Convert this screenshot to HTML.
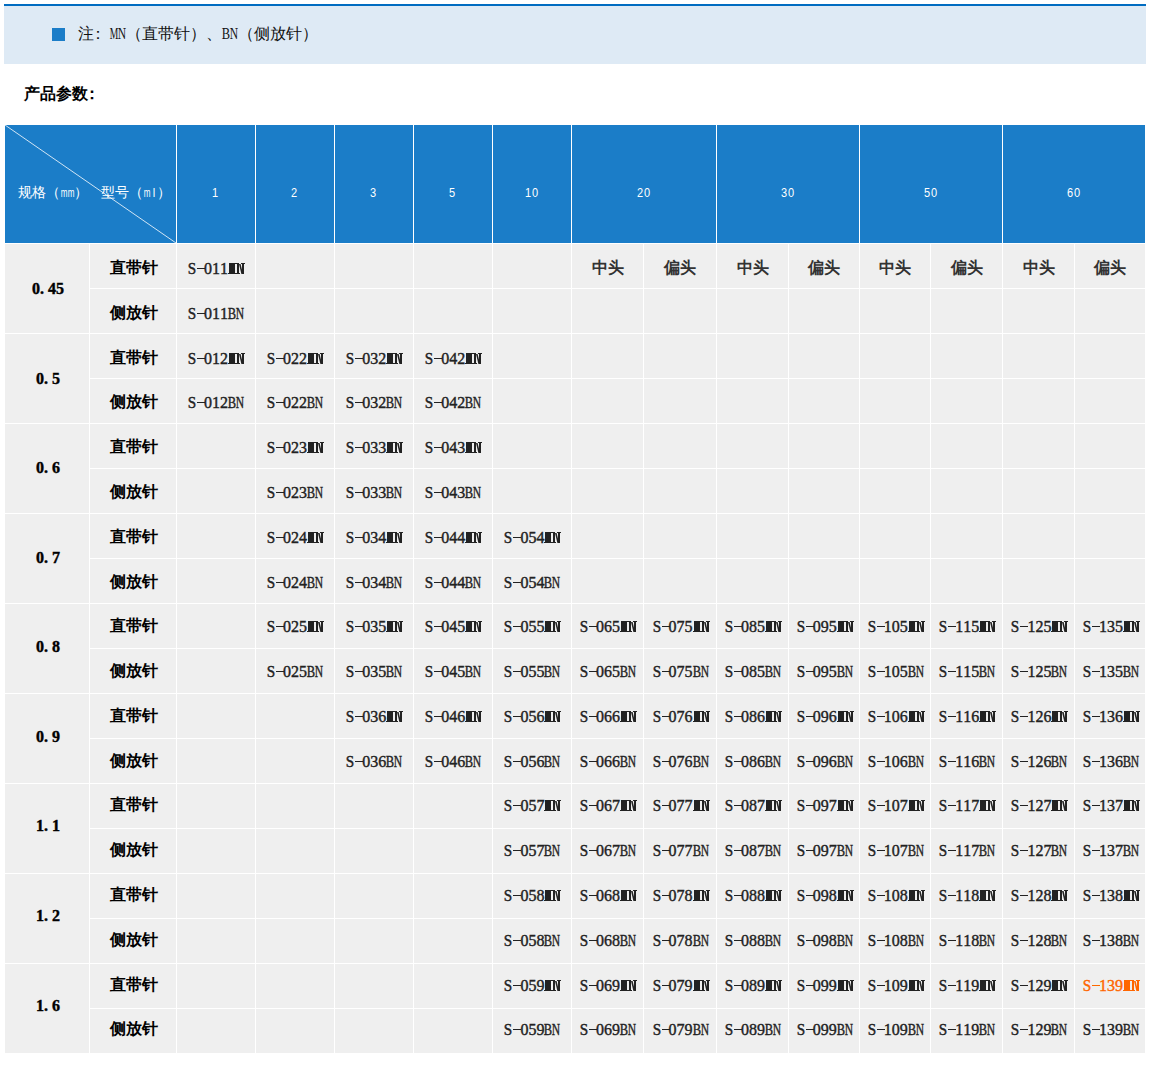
<!DOCTYPE html>
<html><head><meta charset="utf-8"><title>产品参数</title>
<style>
html,body{margin:0;padding:0;background:#fff;}
body{width:1150px;height:1090px;position:relative;overflow:hidden;font-family:"Liberation Sans",sans-serif;}
.note{position:absolute;left:4px;top:4px;width:1142px;height:58px;border-top:2px solid #006cc1;background:#deeaf5;}
.sq{position:absolute;left:48px;top:22px;width:13px;height:13px;background:#1b7dc8;}
.nt{position:absolute;left:74px;top:20px;font-size:16px;line-height:16px;color:#111;white-space:nowrap;}
.ttl{position:absolute;left:24px;top:86px;font-size:16px;line-height:16px;font-weight:bold;color:#000;white-space:nowrap;}
.c{position:absolute;background:#efefef;}
.h{position:absolute;background:#1b7dc8;}
.t{position:absolute;text-align:center;white-space:nowrap;font-size:16px;line-height:16px;color:#333;}
.b{font-weight:bold;color:#000;}
.ht{position:absolute;text-align:center;white-space:nowrap;font-size:14px;line-height:14px;color:#fff;}
.m{display:inline-block;font-family:"Liberation Serif",serif;font-weight:normal;}
.t .m{color:#222;-webkit-text-stroke:0.4px}.t.or .m{color:#ff6600}.t.b .m{font-weight:bold;color:#000}
.g{display:inline-block;width:8px;position:relative;height:16px;vertical-align:top}
.g b{position:absolute;left:-6px;width:20px;text-align:center;font-weight:inherit}
.ht .g{width:7px;height:14px}
.mn{position:absolute;left:0;top:2px}
.hy{position:absolute;left:1px;top:7px;width:8px;height:1px;background:currentColor}.ht .m{font-weight:normal;font-family:"Liberation Sans",sans-serif;font-size:13px}.ht .g b{transform:scaleX(.85)}
.or{color:#ff6600;}
.cj{font-weight:700;color:#333}
</style></head><body>

<div class="note"><div class="sq"></div><div class="nt">注<span style="position:relative;left:-4px">：</span><span class="m"><span class="g"><b style="transform:scaleX(0.60)">M</b></span><span class="g"><b style="transform:scaleX(0.72)">N</b></span></span>（直带针）、<span class="m"><span class="g"><b style="transform:scaleX(0.78)">B</b></span><span class="g"><b style="transform:scaleX(0.72)">N</b></span></span>（侧放针）</div></div>
<div class="ttl">产品参数<span style="position:relative;left:-4px">：</span></div>
<div class="h" style="left:5px;top:125px;width:171px;height:118px"></div>
<div class="h" style="left:177px;top:125px;width:78px;height:118px"></div>
<div class="h" style="left:256px;top:125px;width:78px;height:118px"></div>
<div class="h" style="left:335px;top:125px;width:78px;height:118px"></div>
<div class="h" style="left:414px;top:125px;width:78px;height:118px"></div>
<div class="h" style="left:493px;top:125px;width:78px;height:118px"></div>
<div class="h" style="left:572px;top:125px;width:144px;height:118px"></div>
<div class="h" style="left:717px;top:125px;width:142px;height:118px"></div>
<div class="h" style="left:860px;top:125px;width:142px;height:118px"></div>
<div class="h" style="left:1003px;top:125px;width:142px;height:118px"></div>
<svg style="position:absolute;left:5px;top:125px" width="171" height="118"><line x1="0" y1="0" x2="171" y2="118" stroke="#fff" stroke-opacity="0.8" stroke-width="1"/></svg>
<div class="ht" style="left:18px;top:185px">规格（<span class="m"><span class="g"><b style="transform:scaleX(0.62)">m</b></span><span class="g"><b style="transform:scaleX(0.62)">m</b></span></span>）</div>
<div class="ht" style="left:101px;top:185px">型号（<span class="m"><span class="g"><b style="transform:scaleX(0.62)">m</b></span><span class="g"><b>l</b></span></span>）</div>
<div class="ht" style="left:175px;width:78px;top:185px"><span class="m"><span class="g"><b>1</b></span></span></div>
<div class="ht" style="left:254px;width:78px;top:185px"><span class="m"><span class="g"><b>2</b></span></span></div>
<div class="ht" style="left:333px;width:78px;top:185px"><span class="m"><span class="g"><b>3</b></span></span></div>
<div class="ht" style="left:412px;width:78px;top:185px"><span class="m"><span class="g"><b>5</b></span></span></div>
<div class="ht" style="left:492px;width:78px;top:185px"><span class="m"><span class="g"><b>1</b></span><span class="g"><b>0</b></span></span></div>
<div class="ht" style="left:571px;width:144px;top:185px"><span class="m"><span class="g"><b>2</b></span><span class="g"><b>0</b></span></span></div>
<div class="ht" style="left:716px;width:142px;top:185px"><span class="m"><span class="g"><b>3</b></span><span class="g"><b>0</b></span></span></div>
<div class="ht" style="left:859px;width:142px;top:185px"><span class="m"><span class="g"><b>5</b></span><span class="g"><b>0</b></span></span></div>
<div class="ht" style="left:1002px;width:142px;top:185px"><span class="m"><span class="g"><b>6</b></span><span class="g"><b>0</b></span></span></div>
<div class="c" style="left:5px;top:244px;width:84px;height:89px"></div>
<div class="t b" style="left:6px;width:84px;top:281.0px"><span class="m"><span class="g"><b>0</b></span><span class="g"><b style="left:-8px">.</b></span><span class="g"><b>4</b></span><span class="g"><b>5</b></span></span></div>
<div class="c" style="left:90px;top:244px;width:86px;height:44px"></div>
<div class="t b" style="left:91px;width:86px;top:260.0px">直带针</div>
<div class="c" style="left:177px;top:244px;width:78px;height:44px"></div>
<div class="t" style="left:177.0px;width:78px;top:261.0px"><span class="m"><span class="g"><b style="transform:scaleX(0.95)">S</b></span><span class="g"><i class="hy"></i></span><span class="g"><b>0</b></span><span class="g"><b>1</b></span><span class="g"><b>1</b></span><span class="g" style="width:16px"><svg class="mn" width="17" height="11" fill="currentColor"><path d="M1 0h10v1H1zM0 10h12v1H0zM1 0h6v11H1zM9 0h2v11H9zM11 1h1.6L15 11h-1.6zM14 0h2v11h-2zM13 0h4v1h-4z"/></svg></span></span></div>
<div class="c" style="left:256px;top:244px;width:78px;height:44px"></div>
<div class="c" style="left:335px;top:244px;width:78px;height:44px"></div>
<div class="c" style="left:414px;top:244px;width:78px;height:44px"></div>
<div class="c" style="left:493px;top:244px;width:78px;height:44px"></div>
<div class="c" style="left:572px;top:244px;width:71px;height:44px"></div>
<div class="t cj" style="left:572px;width:71px;top:260.0px">中头</div>
<div class="c" style="left:644px;top:244px;width:72px;height:44px"></div>
<div class="t cj" style="left:644px;width:72px;top:260.0px">偏头</div>
<div class="c" style="left:717px;top:244px;width:71px;height:44px"></div>
<div class="t cj" style="left:717px;width:71px;top:260.0px">中头</div>
<div class="c" style="left:789px;top:244px;width:70px;height:44px"></div>
<div class="t cj" style="left:789px;width:70px;top:260.0px">偏头</div>
<div class="c" style="left:860px;top:244px;width:70px;height:44px"></div>
<div class="t cj" style="left:860px;width:70px;top:260.0px">中头</div>
<div class="c" style="left:931px;top:244px;width:71px;height:44px"></div>
<div class="t cj" style="left:931px;width:71px;top:260.0px">偏头</div>
<div class="c" style="left:1003px;top:244px;width:71px;height:44px"></div>
<div class="t cj" style="left:1003px;width:71px;top:260.0px">中头</div>
<div class="c" style="left:1075px;top:244px;width:70px;height:44px"></div>
<div class="t cj" style="left:1075px;width:70px;top:260.0px">偏头</div>
<div class="c" style="left:90px;top:289px;width:86px;height:44px"></div>
<div class="t b" style="left:91px;width:86px;top:305.0px">侧放针</div>
<div class="c" style="left:177px;top:289px;width:78px;height:44px"></div>
<div class="t" style="left:177.0px;width:78px;top:306.0px"><span class="m"><span class="g"><b style="transform:scaleX(0.95)">S</b></span><span class="g"><i class="hy"></i></span><span class="g"><b>0</b></span><span class="g"><b>1</b></span><span class="g"><b>1</b></span><span class="g"><b style="transform:scaleX(0.78)">B</b></span><span class="g"><b style="transform:scaleX(0.72)">N</b></span></span></div>
<div class="c" style="left:256px;top:289px;width:78px;height:44px"></div>
<div class="c" style="left:335px;top:289px;width:78px;height:44px"></div>
<div class="c" style="left:414px;top:289px;width:78px;height:44px"></div>
<div class="c" style="left:493px;top:289px;width:78px;height:44px"></div>
<div class="c" style="left:572px;top:289px;width:71px;height:44px"></div>
<div class="c" style="left:644px;top:289px;width:72px;height:44px"></div>
<div class="c" style="left:717px;top:289px;width:71px;height:44px"></div>
<div class="c" style="left:789px;top:289px;width:70px;height:44px"></div>
<div class="c" style="left:860px;top:289px;width:70px;height:44px"></div>
<div class="c" style="left:931px;top:289px;width:71px;height:44px"></div>
<div class="c" style="left:1003px;top:289px;width:71px;height:44px"></div>
<div class="c" style="left:1075px;top:289px;width:70px;height:44px"></div>
<div class="c" style="left:5px;top:334px;width:84px;height:89px"></div>
<div class="t b" style="left:6px;width:84px;top:371.0px"><span class="m"><span class="g"><b>0</b></span><span class="g"><b style="left:-8px">.</b></span><span class="g"><b>5</b></span></span></div>
<div class="c" style="left:90px;top:334px;width:86px;height:44px"></div>
<div class="t b" style="left:91px;width:86px;top:350.0px">直带针</div>
<div class="c" style="left:177px;top:334px;width:78px;height:44px"></div>
<div class="t" style="left:177.0px;width:78px;top:351.0px"><span class="m"><span class="g"><b style="transform:scaleX(0.95)">S</b></span><span class="g"><i class="hy"></i></span><span class="g"><b>0</b></span><span class="g"><b>1</b></span><span class="g"><b>2</b></span><span class="g" style="width:16px"><svg class="mn" width="17" height="11" fill="currentColor"><path d="M1 0h10v1H1zM0 10h12v1H0zM1 0h6v11H1zM9 0h2v11H9zM11 1h1.6L15 11h-1.6zM14 0h2v11h-2zM13 0h4v1h-4z"/></svg></span></span></div>
<div class="c" style="left:256px;top:334px;width:78px;height:44px"></div>
<div class="t" style="left:256.1px;width:78px;top:351.0px"><span class="m"><span class="g"><b style="transform:scaleX(0.95)">S</b></span><span class="g"><i class="hy"></i></span><span class="g"><b>0</b></span><span class="g"><b>2</b></span><span class="g"><b>2</b></span><span class="g" style="width:16px"><svg class="mn" width="17" height="11" fill="currentColor"><path d="M1 0h10v1H1zM0 10h12v1H0zM1 0h6v11H1zM9 0h2v11H9zM11 1h1.6L15 11h-1.6zM14 0h2v11h-2zM13 0h4v1h-4z"/></svg></span></span></div>
<div class="c" style="left:335px;top:334px;width:78px;height:44px"></div>
<div class="t" style="left:335.2px;width:78px;top:351.0px"><span class="m"><span class="g"><b style="transform:scaleX(0.95)">S</b></span><span class="g"><i class="hy"></i></span><span class="g"><b>0</b></span><span class="g"><b>3</b></span><span class="g"><b>2</b></span><span class="g" style="width:16px"><svg class="mn" width="17" height="11" fill="currentColor"><path d="M1 0h10v1H1zM0 10h12v1H0zM1 0h6v11H1zM9 0h2v11H9zM11 1h1.6L15 11h-1.6zM14 0h2v11h-2zM13 0h4v1h-4z"/></svg></span></span></div>
<div class="c" style="left:414px;top:334px;width:78px;height:44px"></div>
<div class="t" style="left:414.3px;width:78px;top:351.0px"><span class="m"><span class="g"><b style="transform:scaleX(0.95)">S</b></span><span class="g"><i class="hy"></i></span><span class="g"><b>0</b></span><span class="g"><b>4</b></span><span class="g"><b>2</b></span><span class="g" style="width:16px"><svg class="mn" width="17" height="11" fill="currentColor"><path d="M1 0h10v1H1zM0 10h12v1H0zM1 0h6v11H1zM9 0h2v11H9zM11 1h1.6L15 11h-1.6zM14 0h2v11h-2zM13 0h4v1h-4z"/></svg></span></span></div>
<div class="c" style="left:493px;top:334px;width:78px;height:44px"></div>
<div class="c" style="left:572px;top:334px;width:71px;height:44px"></div>
<div class="c" style="left:644px;top:334px;width:72px;height:44px"></div>
<div class="c" style="left:717px;top:334px;width:71px;height:44px"></div>
<div class="c" style="left:789px;top:334px;width:70px;height:44px"></div>
<div class="c" style="left:860px;top:334px;width:70px;height:44px"></div>
<div class="c" style="left:931px;top:334px;width:71px;height:44px"></div>
<div class="c" style="left:1003px;top:334px;width:71px;height:44px"></div>
<div class="c" style="left:1075px;top:334px;width:70px;height:44px"></div>
<div class="c" style="left:90px;top:379px;width:86px;height:44px"></div>
<div class="t b" style="left:91px;width:86px;top:394.0px">侧放针</div>
<div class="c" style="left:177px;top:379px;width:78px;height:44px"></div>
<div class="t" style="left:177.0px;width:78px;top:395.0px"><span class="m"><span class="g"><b style="transform:scaleX(0.95)">S</b></span><span class="g"><i class="hy"></i></span><span class="g"><b>0</b></span><span class="g"><b>1</b></span><span class="g"><b>2</b></span><span class="g"><b style="transform:scaleX(0.78)">B</b></span><span class="g"><b style="transform:scaleX(0.72)">N</b></span></span></div>
<div class="c" style="left:256px;top:379px;width:78px;height:44px"></div>
<div class="t" style="left:256.1px;width:78px;top:395.0px"><span class="m"><span class="g"><b style="transform:scaleX(0.95)">S</b></span><span class="g"><i class="hy"></i></span><span class="g"><b>0</b></span><span class="g"><b>2</b></span><span class="g"><b>2</b></span><span class="g"><b style="transform:scaleX(0.78)">B</b></span><span class="g"><b style="transform:scaleX(0.72)">N</b></span></span></div>
<div class="c" style="left:335px;top:379px;width:78px;height:44px"></div>
<div class="t" style="left:335.2px;width:78px;top:395.0px"><span class="m"><span class="g"><b style="transform:scaleX(0.95)">S</b></span><span class="g"><i class="hy"></i></span><span class="g"><b>0</b></span><span class="g"><b>3</b></span><span class="g"><b>2</b></span><span class="g"><b style="transform:scaleX(0.78)">B</b></span><span class="g"><b style="transform:scaleX(0.72)">N</b></span></span></div>
<div class="c" style="left:414px;top:379px;width:78px;height:44px"></div>
<div class="t" style="left:414.3px;width:78px;top:395.0px"><span class="m"><span class="g"><b style="transform:scaleX(0.95)">S</b></span><span class="g"><i class="hy"></i></span><span class="g"><b>0</b></span><span class="g"><b>4</b></span><span class="g"><b>2</b></span><span class="g"><b style="transform:scaleX(0.78)">B</b></span><span class="g"><b style="transform:scaleX(0.72)">N</b></span></span></div>
<div class="c" style="left:493px;top:379px;width:78px;height:44px"></div>
<div class="c" style="left:572px;top:379px;width:71px;height:44px"></div>
<div class="c" style="left:644px;top:379px;width:72px;height:44px"></div>
<div class="c" style="left:717px;top:379px;width:71px;height:44px"></div>
<div class="c" style="left:789px;top:379px;width:70px;height:44px"></div>
<div class="c" style="left:860px;top:379px;width:70px;height:44px"></div>
<div class="c" style="left:931px;top:379px;width:71px;height:44px"></div>
<div class="c" style="left:1003px;top:379px;width:71px;height:44px"></div>
<div class="c" style="left:1075px;top:379px;width:70px;height:44px"></div>
<div class="c" style="left:5px;top:424px;width:84px;height:89px"></div>
<div class="t b" style="left:6px;width:84px;top:460.0px"><span class="m"><span class="g"><b>0</b></span><span class="g"><b style="left:-8px">.</b></span><span class="g"><b>6</b></span></span></div>
<div class="c" style="left:90px;top:424px;width:86px;height:44px"></div>
<div class="t b" style="left:91px;width:86px;top:439.0px">直带针</div>
<div class="c" style="left:177px;top:424px;width:78px;height:44px"></div>
<div class="c" style="left:256px;top:424px;width:78px;height:44px"></div>
<div class="t" style="left:256.1px;width:78px;top:440.0px"><span class="m"><span class="g"><b style="transform:scaleX(0.95)">S</b></span><span class="g"><i class="hy"></i></span><span class="g"><b>0</b></span><span class="g"><b>2</b></span><span class="g"><b>3</b></span><span class="g" style="width:16px"><svg class="mn" width="17" height="11" fill="currentColor"><path d="M1 0h10v1H1zM0 10h12v1H0zM1 0h6v11H1zM9 0h2v11H9zM11 1h1.6L15 11h-1.6zM14 0h2v11h-2zM13 0h4v1h-4z"/></svg></span></span></div>
<div class="c" style="left:335px;top:424px;width:78px;height:44px"></div>
<div class="t" style="left:335.2px;width:78px;top:440.0px"><span class="m"><span class="g"><b style="transform:scaleX(0.95)">S</b></span><span class="g"><i class="hy"></i></span><span class="g"><b>0</b></span><span class="g"><b>3</b></span><span class="g"><b>3</b></span><span class="g" style="width:16px"><svg class="mn" width="17" height="11" fill="currentColor"><path d="M1 0h10v1H1zM0 10h12v1H0zM1 0h6v11H1zM9 0h2v11H9zM11 1h1.6L15 11h-1.6zM14 0h2v11h-2zM13 0h4v1h-4z"/></svg></span></span></div>
<div class="c" style="left:414px;top:424px;width:78px;height:44px"></div>
<div class="t" style="left:414.3px;width:78px;top:440.0px"><span class="m"><span class="g"><b style="transform:scaleX(0.95)">S</b></span><span class="g"><i class="hy"></i></span><span class="g"><b>0</b></span><span class="g"><b>4</b></span><span class="g"><b>3</b></span><span class="g" style="width:16px"><svg class="mn" width="17" height="11" fill="currentColor"><path d="M1 0h10v1H1zM0 10h12v1H0zM1 0h6v11H1zM9 0h2v11H9zM11 1h1.6L15 11h-1.6zM14 0h2v11h-2zM13 0h4v1h-4z"/></svg></span></span></div>
<div class="c" style="left:493px;top:424px;width:78px;height:44px"></div>
<div class="c" style="left:572px;top:424px;width:71px;height:44px"></div>
<div class="c" style="left:644px;top:424px;width:72px;height:44px"></div>
<div class="c" style="left:717px;top:424px;width:71px;height:44px"></div>
<div class="c" style="left:789px;top:424px;width:70px;height:44px"></div>
<div class="c" style="left:860px;top:424px;width:70px;height:44px"></div>
<div class="c" style="left:931px;top:424px;width:71px;height:44px"></div>
<div class="c" style="left:1003px;top:424px;width:71px;height:44px"></div>
<div class="c" style="left:1075px;top:424px;width:70px;height:44px"></div>
<div class="c" style="left:90px;top:469px;width:86px;height:44px"></div>
<div class="t b" style="left:91px;width:86px;top:484.0px">侧放针</div>
<div class="c" style="left:177px;top:469px;width:78px;height:44px"></div>
<div class="c" style="left:256px;top:469px;width:78px;height:44px"></div>
<div class="t" style="left:256.1px;width:78px;top:485.0px"><span class="m"><span class="g"><b style="transform:scaleX(0.95)">S</b></span><span class="g"><i class="hy"></i></span><span class="g"><b>0</b></span><span class="g"><b>2</b></span><span class="g"><b>3</b></span><span class="g"><b style="transform:scaleX(0.78)">B</b></span><span class="g"><b style="transform:scaleX(0.72)">N</b></span></span></div>
<div class="c" style="left:335px;top:469px;width:78px;height:44px"></div>
<div class="t" style="left:335.2px;width:78px;top:485.0px"><span class="m"><span class="g"><b style="transform:scaleX(0.95)">S</b></span><span class="g"><i class="hy"></i></span><span class="g"><b>0</b></span><span class="g"><b>3</b></span><span class="g"><b>3</b></span><span class="g"><b style="transform:scaleX(0.78)">B</b></span><span class="g"><b style="transform:scaleX(0.72)">N</b></span></span></div>
<div class="c" style="left:414px;top:469px;width:78px;height:44px"></div>
<div class="t" style="left:414.3px;width:78px;top:485.0px"><span class="m"><span class="g"><b style="transform:scaleX(0.95)">S</b></span><span class="g"><i class="hy"></i></span><span class="g"><b>0</b></span><span class="g"><b>4</b></span><span class="g"><b>3</b></span><span class="g"><b style="transform:scaleX(0.78)">B</b></span><span class="g"><b style="transform:scaleX(0.72)">N</b></span></span></div>
<div class="c" style="left:493px;top:469px;width:78px;height:44px"></div>
<div class="c" style="left:572px;top:469px;width:71px;height:44px"></div>
<div class="c" style="left:644px;top:469px;width:72px;height:44px"></div>
<div class="c" style="left:717px;top:469px;width:71px;height:44px"></div>
<div class="c" style="left:789px;top:469px;width:70px;height:44px"></div>
<div class="c" style="left:860px;top:469px;width:70px;height:44px"></div>
<div class="c" style="left:931px;top:469px;width:71px;height:44px"></div>
<div class="c" style="left:1003px;top:469px;width:71px;height:44px"></div>
<div class="c" style="left:1075px;top:469px;width:70px;height:44px"></div>
<div class="c" style="left:5px;top:514px;width:84px;height:89px"></div>
<div class="t b" style="left:6px;width:84px;top:550.0px"><span class="m"><span class="g"><b>0</b></span><span class="g"><b style="left:-8px">.</b></span><span class="g"><b>7</b></span></span></div>
<div class="c" style="left:90px;top:514px;width:86px;height:44px"></div>
<div class="t b" style="left:91px;width:86px;top:529.0px">直带针</div>
<div class="c" style="left:177px;top:514px;width:78px;height:44px"></div>
<div class="c" style="left:256px;top:514px;width:78px;height:44px"></div>
<div class="t" style="left:256.1px;width:78px;top:530.0px"><span class="m"><span class="g"><b style="transform:scaleX(0.95)">S</b></span><span class="g"><i class="hy"></i></span><span class="g"><b>0</b></span><span class="g"><b>2</b></span><span class="g"><b>4</b></span><span class="g" style="width:16px"><svg class="mn" width="17" height="11" fill="currentColor"><path d="M1 0h10v1H1zM0 10h12v1H0zM1 0h6v11H1zM9 0h2v11H9zM11 1h1.6L15 11h-1.6zM14 0h2v11h-2zM13 0h4v1h-4z"/></svg></span></span></div>
<div class="c" style="left:335px;top:514px;width:78px;height:44px"></div>
<div class="t" style="left:335.2px;width:78px;top:530.0px"><span class="m"><span class="g"><b style="transform:scaleX(0.95)">S</b></span><span class="g"><i class="hy"></i></span><span class="g"><b>0</b></span><span class="g"><b>3</b></span><span class="g"><b>4</b></span><span class="g" style="width:16px"><svg class="mn" width="17" height="11" fill="currentColor"><path d="M1 0h10v1H1zM0 10h12v1H0zM1 0h6v11H1zM9 0h2v11H9zM11 1h1.6L15 11h-1.6zM14 0h2v11h-2zM13 0h4v1h-4z"/></svg></span></span></div>
<div class="c" style="left:414px;top:514px;width:78px;height:44px"></div>
<div class="t" style="left:414.3px;width:78px;top:530.0px"><span class="m"><span class="g"><b style="transform:scaleX(0.95)">S</b></span><span class="g"><i class="hy"></i></span><span class="g"><b>0</b></span><span class="g"><b>4</b></span><span class="g"><b>4</b></span><span class="g" style="width:16px"><svg class="mn" width="17" height="11" fill="currentColor"><path d="M1 0h10v1H1zM0 10h12v1H0zM1 0h6v11H1zM9 0h2v11H9zM11 1h1.6L15 11h-1.6zM14 0h2v11h-2zM13 0h4v1h-4z"/></svg></span></span></div>
<div class="c" style="left:493px;top:514px;width:78px;height:44px"></div>
<div class="t" style="left:493.4px;width:78px;top:530.0px"><span class="m"><span class="g"><b style="transform:scaleX(0.95)">S</b></span><span class="g"><i class="hy"></i></span><span class="g"><b>0</b></span><span class="g"><b>5</b></span><span class="g"><b>4</b></span><span class="g" style="width:16px"><svg class="mn" width="17" height="11" fill="currentColor"><path d="M1 0h10v1H1zM0 10h12v1H0zM1 0h6v11H1zM9 0h2v11H9zM11 1h1.6L15 11h-1.6zM14 0h2v11h-2zM13 0h4v1h-4z"/></svg></span></span></div>
<div class="c" style="left:572px;top:514px;width:71px;height:44px"></div>
<div class="c" style="left:644px;top:514px;width:72px;height:44px"></div>
<div class="c" style="left:717px;top:514px;width:71px;height:44px"></div>
<div class="c" style="left:789px;top:514px;width:70px;height:44px"></div>
<div class="c" style="left:860px;top:514px;width:70px;height:44px"></div>
<div class="c" style="left:931px;top:514px;width:71px;height:44px"></div>
<div class="c" style="left:1003px;top:514px;width:71px;height:44px"></div>
<div class="c" style="left:1075px;top:514px;width:70px;height:44px"></div>
<div class="c" style="left:90px;top:559px;width:86px;height:44px"></div>
<div class="t b" style="left:91px;width:86px;top:574.0px">侧放针</div>
<div class="c" style="left:177px;top:559px;width:78px;height:44px"></div>
<div class="c" style="left:256px;top:559px;width:78px;height:44px"></div>
<div class="t" style="left:256.1px;width:78px;top:575.0px"><span class="m"><span class="g"><b style="transform:scaleX(0.95)">S</b></span><span class="g"><i class="hy"></i></span><span class="g"><b>0</b></span><span class="g"><b>2</b></span><span class="g"><b>4</b></span><span class="g"><b style="transform:scaleX(0.78)">B</b></span><span class="g"><b style="transform:scaleX(0.72)">N</b></span></span></div>
<div class="c" style="left:335px;top:559px;width:78px;height:44px"></div>
<div class="t" style="left:335.2px;width:78px;top:575.0px"><span class="m"><span class="g"><b style="transform:scaleX(0.95)">S</b></span><span class="g"><i class="hy"></i></span><span class="g"><b>0</b></span><span class="g"><b>3</b></span><span class="g"><b>4</b></span><span class="g"><b style="transform:scaleX(0.78)">B</b></span><span class="g"><b style="transform:scaleX(0.72)">N</b></span></span></div>
<div class="c" style="left:414px;top:559px;width:78px;height:44px"></div>
<div class="t" style="left:414.3px;width:78px;top:575.0px"><span class="m"><span class="g"><b style="transform:scaleX(0.95)">S</b></span><span class="g"><i class="hy"></i></span><span class="g"><b>0</b></span><span class="g"><b>4</b></span><span class="g"><b>4</b></span><span class="g"><b style="transform:scaleX(0.78)">B</b></span><span class="g"><b style="transform:scaleX(0.72)">N</b></span></span></div>
<div class="c" style="left:493px;top:559px;width:78px;height:44px"></div>
<div class="t" style="left:493.4px;width:78px;top:575.0px"><span class="m"><span class="g"><b style="transform:scaleX(0.95)">S</b></span><span class="g"><i class="hy"></i></span><span class="g"><b>0</b></span><span class="g"><b>5</b></span><span class="g"><b>4</b></span><span class="g"><b style="transform:scaleX(0.78)">B</b></span><span class="g"><b style="transform:scaleX(0.72)">N</b></span></span></div>
<div class="c" style="left:572px;top:559px;width:71px;height:44px"></div>
<div class="c" style="left:644px;top:559px;width:72px;height:44px"></div>
<div class="c" style="left:717px;top:559px;width:71px;height:44px"></div>
<div class="c" style="left:789px;top:559px;width:70px;height:44px"></div>
<div class="c" style="left:860px;top:559px;width:70px;height:44px"></div>
<div class="c" style="left:931px;top:559px;width:71px;height:44px"></div>
<div class="c" style="left:1003px;top:559px;width:71px;height:44px"></div>
<div class="c" style="left:1075px;top:559px;width:70px;height:44px"></div>
<div class="c" style="left:5px;top:604px;width:84px;height:89px"></div>
<div class="t b" style="left:6px;width:84px;top:639.0px"><span class="m"><span class="g"><b>0</b></span><span class="g"><b style="left:-8px">.</b></span><span class="g"><b>8</b></span></span></div>
<div class="c" style="left:90px;top:604px;width:86px;height:44px"></div>
<div class="t b" style="left:91px;width:86px;top:618.0px">直带针</div>
<div class="c" style="left:177px;top:604px;width:78px;height:44px"></div>
<div class="c" style="left:256px;top:604px;width:78px;height:44px"></div>
<div class="t" style="left:256.1px;width:78px;top:619.0px"><span class="m"><span class="g"><b style="transform:scaleX(0.95)">S</b></span><span class="g"><i class="hy"></i></span><span class="g"><b>0</b></span><span class="g"><b>2</b></span><span class="g"><b>5</b></span><span class="g" style="width:16px"><svg class="mn" width="17" height="11" fill="currentColor"><path d="M1 0h10v1H1zM0 10h12v1H0zM1 0h6v11H1zM9 0h2v11H9zM11 1h1.6L15 11h-1.6zM14 0h2v11h-2zM13 0h4v1h-4z"/></svg></span></span></div>
<div class="c" style="left:335px;top:604px;width:78px;height:44px"></div>
<div class="t" style="left:335.2px;width:78px;top:619.0px"><span class="m"><span class="g"><b style="transform:scaleX(0.95)">S</b></span><span class="g"><i class="hy"></i></span><span class="g"><b>0</b></span><span class="g"><b>3</b></span><span class="g"><b>5</b></span><span class="g" style="width:16px"><svg class="mn" width="17" height="11" fill="currentColor"><path d="M1 0h10v1H1zM0 10h12v1H0zM1 0h6v11H1zM9 0h2v11H9zM11 1h1.6L15 11h-1.6zM14 0h2v11h-2zM13 0h4v1h-4z"/></svg></span></span></div>
<div class="c" style="left:414px;top:604px;width:78px;height:44px"></div>
<div class="t" style="left:414.3px;width:78px;top:619.0px"><span class="m"><span class="g"><b style="transform:scaleX(0.95)">S</b></span><span class="g"><i class="hy"></i></span><span class="g"><b>0</b></span><span class="g"><b>4</b></span><span class="g"><b>5</b></span><span class="g" style="width:16px"><svg class="mn" width="17" height="11" fill="currentColor"><path d="M1 0h10v1H1zM0 10h12v1H0zM1 0h6v11H1zM9 0h2v11H9zM11 1h1.6L15 11h-1.6zM14 0h2v11h-2zM13 0h4v1h-4z"/></svg></span></span></div>
<div class="c" style="left:493px;top:604px;width:78px;height:44px"></div>
<div class="t" style="left:493.4px;width:78px;top:619.0px"><span class="m"><span class="g"><b style="transform:scaleX(0.95)">S</b></span><span class="g"><i class="hy"></i></span><span class="g"><b>0</b></span><span class="g"><b>5</b></span><span class="g"><b>5</b></span><span class="g" style="width:16px"><svg class="mn" width="17" height="11" fill="currentColor"><path d="M1 0h10v1H1zM0 10h12v1H0zM1 0h6v11H1zM9 0h2v11H9zM11 1h1.6L15 11h-1.6zM14 0h2v11h-2zM13 0h4v1h-4z"/></svg></span></span></div>
<div class="c" style="left:572px;top:604px;width:71px;height:44px"></div>
<div class="t" style="left:572.4px;width:71px;top:619.0px"><span class="m"><span class="g"><b style="transform:scaleX(0.95)">S</b></span><span class="g"><i class="hy"></i></span><span class="g"><b>0</b></span><span class="g"><b>6</b></span><span class="g"><b>5</b></span><span class="g" style="width:16px"><svg class="mn" width="17" height="11" fill="currentColor"><path d="M1 0h10v1H1zM0 10h12v1H0zM1 0h6v11H1zM9 0h2v11H9zM11 1h1.6L15 11h-1.6zM14 0h2v11h-2zM13 0h4v1h-4z"/></svg></span></span></div>
<div class="c" style="left:644px;top:604px;width:72px;height:44px"></div>
<div class="t" style="left:644.5px;width:72px;top:619.0px"><span class="m"><span class="g"><b style="transform:scaleX(0.95)">S</b></span><span class="g"><i class="hy"></i></span><span class="g"><b>0</b></span><span class="g"><b>7</b></span><span class="g"><b>5</b></span><span class="g" style="width:16px"><svg class="mn" width="17" height="11" fill="currentColor"><path d="M1 0h10v1H1zM0 10h12v1H0zM1 0h6v11H1zM9 0h2v11H9zM11 1h1.6L15 11h-1.6zM14 0h2v11h-2zM13 0h4v1h-4z"/></svg></span></span></div>
<div class="c" style="left:717px;top:604px;width:71px;height:44px"></div>
<div class="t" style="left:717.6px;width:71px;top:619.0px"><span class="m"><span class="g"><b style="transform:scaleX(0.95)">S</b></span><span class="g"><i class="hy"></i></span><span class="g"><b>0</b></span><span class="g"><b>8</b></span><span class="g"><b>5</b></span><span class="g" style="width:16px"><svg class="mn" width="17" height="11" fill="currentColor"><path d="M1 0h10v1H1zM0 10h12v1H0zM1 0h6v11H1zM9 0h2v11H9zM11 1h1.6L15 11h-1.6zM14 0h2v11h-2zM13 0h4v1h-4z"/></svg></span></span></div>
<div class="c" style="left:789px;top:604px;width:70px;height:44px"></div>
<div class="t" style="left:789.7px;width:70px;top:619.0px"><span class="m"><span class="g"><b style="transform:scaleX(0.95)">S</b></span><span class="g"><i class="hy"></i></span><span class="g"><b>0</b></span><span class="g"><b>9</b></span><span class="g"><b>5</b></span><span class="g" style="width:16px"><svg class="mn" width="17" height="11" fill="currentColor"><path d="M1 0h10v1H1zM0 10h12v1H0zM1 0h6v11H1zM9 0h2v11H9zM11 1h1.6L15 11h-1.6zM14 0h2v11h-2zM13 0h4v1h-4z"/></svg></span></span></div>
<div class="c" style="left:860px;top:604px;width:70px;height:44px"></div>
<div class="t" style="left:860.8px;width:70px;top:619.0px"><span class="m"><span class="g"><b style="transform:scaleX(0.95)">S</b></span><span class="g"><i class="hy"></i></span><span class="g"><b>1</b></span><span class="g"><b>0</b></span><span class="g"><b>5</b></span><span class="g" style="width:16px"><svg class="mn" width="17" height="11" fill="currentColor"><path d="M1 0h10v1H1zM0 10h12v1H0zM1 0h6v11H1zM9 0h2v11H9zM11 1h1.6L15 11h-1.6zM14 0h2v11h-2zM13 0h4v1h-4z"/></svg></span></span></div>
<div class="c" style="left:931px;top:604px;width:71px;height:44px"></div>
<div class="t" style="left:931.8px;width:71px;top:619.0px"><span class="m"><span class="g"><b style="transform:scaleX(0.95)">S</b></span><span class="g"><i class="hy"></i></span><span class="g"><b>1</b></span><span class="g"><b>1</b></span><span class="g"><b>5</b></span><span class="g" style="width:16px"><svg class="mn" width="17" height="11" fill="currentColor"><path d="M1 0h10v1H1zM0 10h12v1H0zM1 0h6v11H1zM9 0h2v11H9zM11 1h1.6L15 11h-1.6zM14 0h2v11h-2zM13 0h4v1h-4z"/></svg></span></span></div>
<div class="c" style="left:1003px;top:604px;width:71px;height:44px"></div>
<div class="t" style="left:1003.9px;width:71px;top:619.0px"><span class="m"><span class="g"><b style="transform:scaleX(0.95)">S</b></span><span class="g"><i class="hy"></i></span><span class="g"><b>1</b></span><span class="g"><b>2</b></span><span class="g"><b>5</b></span><span class="g" style="width:16px"><svg class="mn" width="17" height="11" fill="currentColor"><path d="M1 0h10v1H1zM0 10h12v1H0zM1 0h6v11H1zM9 0h2v11H9zM11 1h1.6L15 11h-1.6zM14 0h2v11h-2zM13 0h4v1h-4z"/></svg></span></span></div>
<div class="c" style="left:1075px;top:604px;width:70px;height:44px"></div>
<div class="t" style="left:1076.0px;width:70px;top:619.0px"><span class="m"><span class="g"><b style="transform:scaleX(0.95)">S</b></span><span class="g"><i class="hy"></i></span><span class="g"><b>1</b></span><span class="g"><b>3</b></span><span class="g"><b>5</b></span><span class="g" style="width:16px"><svg class="mn" width="17" height="11" fill="currentColor"><path d="M1 0h10v1H1zM0 10h12v1H0zM1 0h6v11H1zM9 0h2v11H9zM11 1h1.6L15 11h-1.6zM14 0h2v11h-2zM13 0h4v1h-4z"/></svg></span></span></div>
<div class="c" style="left:90px;top:649px;width:86px;height:44px"></div>
<div class="t b" style="left:91px;width:86px;top:663.0px">侧放针</div>
<div class="c" style="left:177px;top:649px;width:78px;height:44px"></div>
<div class="c" style="left:256px;top:649px;width:78px;height:44px"></div>
<div class="t" style="left:256.1px;width:78px;top:664.0px"><span class="m"><span class="g"><b style="transform:scaleX(0.95)">S</b></span><span class="g"><i class="hy"></i></span><span class="g"><b>0</b></span><span class="g"><b>2</b></span><span class="g"><b>5</b></span><span class="g"><b style="transform:scaleX(0.78)">B</b></span><span class="g"><b style="transform:scaleX(0.72)">N</b></span></span></div>
<div class="c" style="left:335px;top:649px;width:78px;height:44px"></div>
<div class="t" style="left:335.2px;width:78px;top:664.0px"><span class="m"><span class="g"><b style="transform:scaleX(0.95)">S</b></span><span class="g"><i class="hy"></i></span><span class="g"><b>0</b></span><span class="g"><b>3</b></span><span class="g"><b>5</b></span><span class="g"><b style="transform:scaleX(0.78)">B</b></span><span class="g"><b style="transform:scaleX(0.72)">N</b></span></span></div>
<div class="c" style="left:414px;top:649px;width:78px;height:44px"></div>
<div class="t" style="left:414.3px;width:78px;top:664.0px"><span class="m"><span class="g"><b style="transform:scaleX(0.95)">S</b></span><span class="g"><i class="hy"></i></span><span class="g"><b>0</b></span><span class="g"><b>4</b></span><span class="g"><b>5</b></span><span class="g"><b style="transform:scaleX(0.78)">B</b></span><span class="g"><b style="transform:scaleX(0.72)">N</b></span></span></div>
<div class="c" style="left:493px;top:649px;width:78px;height:44px"></div>
<div class="t" style="left:493.4px;width:78px;top:664.0px"><span class="m"><span class="g"><b style="transform:scaleX(0.95)">S</b></span><span class="g"><i class="hy"></i></span><span class="g"><b>0</b></span><span class="g"><b>5</b></span><span class="g"><b>5</b></span><span class="g"><b style="transform:scaleX(0.78)">B</b></span><span class="g"><b style="transform:scaleX(0.72)">N</b></span></span></div>
<div class="c" style="left:572px;top:649px;width:71px;height:44px"></div>
<div class="t" style="left:572.4px;width:71px;top:664.0px"><span class="m"><span class="g"><b style="transform:scaleX(0.95)">S</b></span><span class="g"><i class="hy"></i></span><span class="g"><b>0</b></span><span class="g"><b>6</b></span><span class="g"><b>5</b></span><span class="g"><b style="transform:scaleX(0.78)">B</b></span><span class="g"><b style="transform:scaleX(0.72)">N</b></span></span></div>
<div class="c" style="left:644px;top:649px;width:72px;height:44px"></div>
<div class="t" style="left:644.5px;width:72px;top:664.0px"><span class="m"><span class="g"><b style="transform:scaleX(0.95)">S</b></span><span class="g"><i class="hy"></i></span><span class="g"><b>0</b></span><span class="g"><b>7</b></span><span class="g"><b>5</b></span><span class="g"><b style="transform:scaleX(0.78)">B</b></span><span class="g"><b style="transform:scaleX(0.72)">N</b></span></span></div>
<div class="c" style="left:717px;top:649px;width:71px;height:44px"></div>
<div class="t" style="left:717.6px;width:71px;top:664.0px"><span class="m"><span class="g"><b style="transform:scaleX(0.95)">S</b></span><span class="g"><i class="hy"></i></span><span class="g"><b>0</b></span><span class="g"><b>8</b></span><span class="g"><b>5</b></span><span class="g"><b style="transform:scaleX(0.78)">B</b></span><span class="g"><b style="transform:scaleX(0.72)">N</b></span></span></div>
<div class="c" style="left:789px;top:649px;width:70px;height:44px"></div>
<div class="t" style="left:789.7px;width:70px;top:664.0px"><span class="m"><span class="g"><b style="transform:scaleX(0.95)">S</b></span><span class="g"><i class="hy"></i></span><span class="g"><b>0</b></span><span class="g"><b>9</b></span><span class="g"><b>5</b></span><span class="g"><b style="transform:scaleX(0.78)">B</b></span><span class="g"><b style="transform:scaleX(0.72)">N</b></span></span></div>
<div class="c" style="left:860px;top:649px;width:70px;height:44px"></div>
<div class="t" style="left:860.8px;width:70px;top:664.0px"><span class="m"><span class="g"><b style="transform:scaleX(0.95)">S</b></span><span class="g"><i class="hy"></i></span><span class="g"><b>1</b></span><span class="g"><b>0</b></span><span class="g"><b>5</b></span><span class="g"><b style="transform:scaleX(0.78)">B</b></span><span class="g"><b style="transform:scaleX(0.72)">N</b></span></span></div>
<div class="c" style="left:931px;top:649px;width:71px;height:44px"></div>
<div class="t" style="left:931.8px;width:71px;top:664.0px"><span class="m"><span class="g"><b style="transform:scaleX(0.95)">S</b></span><span class="g"><i class="hy"></i></span><span class="g"><b>1</b></span><span class="g"><b>1</b></span><span class="g"><b>5</b></span><span class="g"><b style="transform:scaleX(0.78)">B</b></span><span class="g"><b style="transform:scaleX(0.72)">N</b></span></span></div>
<div class="c" style="left:1003px;top:649px;width:71px;height:44px"></div>
<div class="t" style="left:1003.9px;width:71px;top:664.0px"><span class="m"><span class="g"><b style="transform:scaleX(0.95)">S</b></span><span class="g"><i class="hy"></i></span><span class="g"><b>1</b></span><span class="g"><b>2</b></span><span class="g"><b>5</b></span><span class="g"><b style="transform:scaleX(0.78)">B</b></span><span class="g"><b style="transform:scaleX(0.72)">N</b></span></span></div>
<div class="c" style="left:1075px;top:649px;width:70px;height:44px"></div>
<div class="t" style="left:1076.0px;width:70px;top:664.0px"><span class="m"><span class="g"><b style="transform:scaleX(0.95)">S</b></span><span class="g"><i class="hy"></i></span><span class="g"><b>1</b></span><span class="g"><b>3</b></span><span class="g"><b>5</b></span><span class="g"><b style="transform:scaleX(0.78)">B</b></span><span class="g"><b style="transform:scaleX(0.72)">N</b></span></span></div>
<div class="c" style="left:5px;top:694px;width:84px;height:89px"></div>
<div class="t b" style="left:6px;width:84px;top:729.0px"><span class="m"><span class="g"><b>0</b></span><span class="g"><b style="left:-8px">.</b></span><span class="g"><b>9</b></span></span></div>
<div class="c" style="left:90px;top:694px;width:86px;height:44px"></div>
<div class="t b" style="left:91px;width:86px;top:708.0px">直带针</div>
<div class="c" style="left:177px;top:694px;width:78px;height:44px"></div>
<div class="c" style="left:256px;top:694px;width:78px;height:44px"></div>
<div class="c" style="left:335px;top:694px;width:78px;height:44px"></div>
<div class="t" style="left:335.2px;width:78px;top:709.0px"><span class="m"><span class="g"><b style="transform:scaleX(0.95)">S</b></span><span class="g"><i class="hy"></i></span><span class="g"><b>0</b></span><span class="g"><b>3</b></span><span class="g"><b>6</b></span><span class="g" style="width:16px"><svg class="mn" width="17" height="11" fill="currentColor"><path d="M1 0h10v1H1zM0 10h12v1H0zM1 0h6v11H1zM9 0h2v11H9zM11 1h1.6L15 11h-1.6zM14 0h2v11h-2zM13 0h4v1h-4z"/></svg></span></span></div>
<div class="c" style="left:414px;top:694px;width:78px;height:44px"></div>
<div class="t" style="left:414.3px;width:78px;top:709.0px"><span class="m"><span class="g"><b style="transform:scaleX(0.95)">S</b></span><span class="g"><i class="hy"></i></span><span class="g"><b>0</b></span><span class="g"><b>4</b></span><span class="g"><b>6</b></span><span class="g" style="width:16px"><svg class="mn" width="17" height="11" fill="currentColor"><path d="M1 0h10v1H1zM0 10h12v1H0zM1 0h6v11H1zM9 0h2v11H9zM11 1h1.6L15 11h-1.6zM14 0h2v11h-2zM13 0h4v1h-4z"/></svg></span></span></div>
<div class="c" style="left:493px;top:694px;width:78px;height:44px"></div>
<div class="t" style="left:493.4px;width:78px;top:709.0px"><span class="m"><span class="g"><b style="transform:scaleX(0.95)">S</b></span><span class="g"><i class="hy"></i></span><span class="g"><b>0</b></span><span class="g"><b>5</b></span><span class="g"><b>6</b></span><span class="g" style="width:16px"><svg class="mn" width="17" height="11" fill="currentColor"><path d="M1 0h10v1H1zM0 10h12v1H0zM1 0h6v11H1zM9 0h2v11H9zM11 1h1.6L15 11h-1.6zM14 0h2v11h-2zM13 0h4v1h-4z"/></svg></span></span></div>
<div class="c" style="left:572px;top:694px;width:71px;height:44px"></div>
<div class="t" style="left:572.4px;width:71px;top:709.0px"><span class="m"><span class="g"><b style="transform:scaleX(0.95)">S</b></span><span class="g"><i class="hy"></i></span><span class="g"><b>0</b></span><span class="g"><b>6</b></span><span class="g"><b>6</b></span><span class="g" style="width:16px"><svg class="mn" width="17" height="11" fill="currentColor"><path d="M1 0h10v1H1zM0 10h12v1H0zM1 0h6v11H1zM9 0h2v11H9zM11 1h1.6L15 11h-1.6zM14 0h2v11h-2zM13 0h4v1h-4z"/></svg></span></span></div>
<div class="c" style="left:644px;top:694px;width:72px;height:44px"></div>
<div class="t" style="left:644.5px;width:72px;top:709.0px"><span class="m"><span class="g"><b style="transform:scaleX(0.95)">S</b></span><span class="g"><i class="hy"></i></span><span class="g"><b>0</b></span><span class="g"><b>7</b></span><span class="g"><b>6</b></span><span class="g" style="width:16px"><svg class="mn" width="17" height="11" fill="currentColor"><path d="M1 0h10v1H1zM0 10h12v1H0zM1 0h6v11H1zM9 0h2v11H9zM11 1h1.6L15 11h-1.6zM14 0h2v11h-2zM13 0h4v1h-4z"/></svg></span></span></div>
<div class="c" style="left:717px;top:694px;width:71px;height:44px"></div>
<div class="t" style="left:717.6px;width:71px;top:709.0px"><span class="m"><span class="g"><b style="transform:scaleX(0.95)">S</b></span><span class="g"><i class="hy"></i></span><span class="g"><b>0</b></span><span class="g"><b>8</b></span><span class="g"><b>6</b></span><span class="g" style="width:16px"><svg class="mn" width="17" height="11" fill="currentColor"><path d="M1 0h10v1H1zM0 10h12v1H0zM1 0h6v11H1zM9 0h2v11H9zM11 1h1.6L15 11h-1.6zM14 0h2v11h-2zM13 0h4v1h-4z"/></svg></span></span></div>
<div class="c" style="left:789px;top:694px;width:70px;height:44px"></div>
<div class="t" style="left:789.7px;width:70px;top:709.0px"><span class="m"><span class="g"><b style="transform:scaleX(0.95)">S</b></span><span class="g"><i class="hy"></i></span><span class="g"><b>0</b></span><span class="g"><b>9</b></span><span class="g"><b>6</b></span><span class="g" style="width:16px"><svg class="mn" width="17" height="11" fill="currentColor"><path d="M1 0h10v1H1zM0 10h12v1H0zM1 0h6v11H1zM9 0h2v11H9zM11 1h1.6L15 11h-1.6zM14 0h2v11h-2zM13 0h4v1h-4z"/></svg></span></span></div>
<div class="c" style="left:860px;top:694px;width:70px;height:44px"></div>
<div class="t" style="left:860.8px;width:70px;top:709.0px"><span class="m"><span class="g"><b style="transform:scaleX(0.95)">S</b></span><span class="g"><i class="hy"></i></span><span class="g"><b>1</b></span><span class="g"><b>0</b></span><span class="g"><b>6</b></span><span class="g" style="width:16px"><svg class="mn" width="17" height="11" fill="currentColor"><path d="M1 0h10v1H1zM0 10h12v1H0zM1 0h6v11H1zM9 0h2v11H9zM11 1h1.6L15 11h-1.6zM14 0h2v11h-2zM13 0h4v1h-4z"/></svg></span></span></div>
<div class="c" style="left:931px;top:694px;width:71px;height:44px"></div>
<div class="t" style="left:931.8px;width:71px;top:709.0px"><span class="m"><span class="g"><b style="transform:scaleX(0.95)">S</b></span><span class="g"><i class="hy"></i></span><span class="g"><b>1</b></span><span class="g"><b>1</b></span><span class="g"><b>6</b></span><span class="g" style="width:16px"><svg class="mn" width="17" height="11" fill="currentColor"><path d="M1 0h10v1H1zM0 10h12v1H0zM1 0h6v11H1zM9 0h2v11H9zM11 1h1.6L15 11h-1.6zM14 0h2v11h-2zM13 0h4v1h-4z"/></svg></span></span></div>
<div class="c" style="left:1003px;top:694px;width:71px;height:44px"></div>
<div class="t" style="left:1003.9px;width:71px;top:709.0px"><span class="m"><span class="g"><b style="transform:scaleX(0.95)">S</b></span><span class="g"><i class="hy"></i></span><span class="g"><b>1</b></span><span class="g"><b>2</b></span><span class="g"><b>6</b></span><span class="g" style="width:16px"><svg class="mn" width="17" height="11" fill="currentColor"><path d="M1 0h10v1H1zM0 10h12v1H0zM1 0h6v11H1zM9 0h2v11H9zM11 1h1.6L15 11h-1.6zM14 0h2v11h-2zM13 0h4v1h-4z"/></svg></span></span></div>
<div class="c" style="left:1075px;top:694px;width:70px;height:44px"></div>
<div class="t" style="left:1076.0px;width:70px;top:709.0px"><span class="m"><span class="g"><b style="transform:scaleX(0.95)">S</b></span><span class="g"><i class="hy"></i></span><span class="g"><b>1</b></span><span class="g"><b>3</b></span><span class="g"><b>6</b></span><span class="g" style="width:16px"><svg class="mn" width="17" height="11" fill="currentColor"><path d="M1 0h10v1H1zM0 10h12v1H0zM1 0h6v11H1zM9 0h2v11H9zM11 1h1.6L15 11h-1.6zM14 0h2v11h-2zM13 0h4v1h-4z"/></svg></span></span></div>
<div class="c" style="left:90px;top:739px;width:86px;height:44px"></div>
<div class="t b" style="left:91px;width:86px;top:753.0px">侧放针</div>
<div class="c" style="left:177px;top:739px;width:78px;height:44px"></div>
<div class="c" style="left:256px;top:739px;width:78px;height:44px"></div>
<div class="c" style="left:335px;top:739px;width:78px;height:44px"></div>
<div class="t" style="left:335.2px;width:78px;top:754.0px"><span class="m"><span class="g"><b style="transform:scaleX(0.95)">S</b></span><span class="g"><i class="hy"></i></span><span class="g"><b>0</b></span><span class="g"><b>3</b></span><span class="g"><b>6</b></span><span class="g"><b style="transform:scaleX(0.78)">B</b></span><span class="g"><b style="transform:scaleX(0.72)">N</b></span></span></div>
<div class="c" style="left:414px;top:739px;width:78px;height:44px"></div>
<div class="t" style="left:414.3px;width:78px;top:754.0px"><span class="m"><span class="g"><b style="transform:scaleX(0.95)">S</b></span><span class="g"><i class="hy"></i></span><span class="g"><b>0</b></span><span class="g"><b>4</b></span><span class="g"><b>6</b></span><span class="g"><b style="transform:scaleX(0.78)">B</b></span><span class="g"><b style="transform:scaleX(0.72)">N</b></span></span></div>
<div class="c" style="left:493px;top:739px;width:78px;height:44px"></div>
<div class="t" style="left:493.4px;width:78px;top:754.0px"><span class="m"><span class="g"><b style="transform:scaleX(0.95)">S</b></span><span class="g"><i class="hy"></i></span><span class="g"><b>0</b></span><span class="g"><b>5</b></span><span class="g"><b>6</b></span><span class="g"><b style="transform:scaleX(0.78)">B</b></span><span class="g"><b style="transform:scaleX(0.72)">N</b></span></span></div>
<div class="c" style="left:572px;top:739px;width:71px;height:44px"></div>
<div class="t" style="left:572.4px;width:71px;top:754.0px"><span class="m"><span class="g"><b style="transform:scaleX(0.95)">S</b></span><span class="g"><i class="hy"></i></span><span class="g"><b>0</b></span><span class="g"><b>6</b></span><span class="g"><b>6</b></span><span class="g"><b style="transform:scaleX(0.78)">B</b></span><span class="g"><b style="transform:scaleX(0.72)">N</b></span></span></div>
<div class="c" style="left:644px;top:739px;width:72px;height:44px"></div>
<div class="t" style="left:644.5px;width:72px;top:754.0px"><span class="m"><span class="g"><b style="transform:scaleX(0.95)">S</b></span><span class="g"><i class="hy"></i></span><span class="g"><b>0</b></span><span class="g"><b>7</b></span><span class="g"><b>6</b></span><span class="g"><b style="transform:scaleX(0.78)">B</b></span><span class="g"><b style="transform:scaleX(0.72)">N</b></span></span></div>
<div class="c" style="left:717px;top:739px;width:71px;height:44px"></div>
<div class="t" style="left:717.6px;width:71px;top:754.0px"><span class="m"><span class="g"><b style="transform:scaleX(0.95)">S</b></span><span class="g"><i class="hy"></i></span><span class="g"><b>0</b></span><span class="g"><b>8</b></span><span class="g"><b>6</b></span><span class="g"><b style="transform:scaleX(0.78)">B</b></span><span class="g"><b style="transform:scaleX(0.72)">N</b></span></span></div>
<div class="c" style="left:789px;top:739px;width:70px;height:44px"></div>
<div class="t" style="left:789.7px;width:70px;top:754.0px"><span class="m"><span class="g"><b style="transform:scaleX(0.95)">S</b></span><span class="g"><i class="hy"></i></span><span class="g"><b>0</b></span><span class="g"><b>9</b></span><span class="g"><b>6</b></span><span class="g"><b style="transform:scaleX(0.78)">B</b></span><span class="g"><b style="transform:scaleX(0.72)">N</b></span></span></div>
<div class="c" style="left:860px;top:739px;width:70px;height:44px"></div>
<div class="t" style="left:860.8px;width:70px;top:754.0px"><span class="m"><span class="g"><b style="transform:scaleX(0.95)">S</b></span><span class="g"><i class="hy"></i></span><span class="g"><b>1</b></span><span class="g"><b>0</b></span><span class="g"><b>6</b></span><span class="g"><b style="transform:scaleX(0.78)">B</b></span><span class="g"><b style="transform:scaleX(0.72)">N</b></span></span></div>
<div class="c" style="left:931px;top:739px;width:71px;height:44px"></div>
<div class="t" style="left:931.8px;width:71px;top:754.0px"><span class="m"><span class="g"><b style="transform:scaleX(0.95)">S</b></span><span class="g"><i class="hy"></i></span><span class="g"><b>1</b></span><span class="g"><b>1</b></span><span class="g"><b>6</b></span><span class="g"><b style="transform:scaleX(0.78)">B</b></span><span class="g"><b style="transform:scaleX(0.72)">N</b></span></span></div>
<div class="c" style="left:1003px;top:739px;width:71px;height:44px"></div>
<div class="t" style="left:1003.9px;width:71px;top:754.0px"><span class="m"><span class="g"><b style="transform:scaleX(0.95)">S</b></span><span class="g"><i class="hy"></i></span><span class="g"><b>1</b></span><span class="g"><b>2</b></span><span class="g"><b>6</b></span><span class="g"><b style="transform:scaleX(0.78)">B</b></span><span class="g"><b style="transform:scaleX(0.72)">N</b></span></span></div>
<div class="c" style="left:1075px;top:739px;width:70px;height:44px"></div>
<div class="t" style="left:1076.0px;width:70px;top:754.0px"><span class="m"><span class="g"><b style="transform:scaleX(0.95)">S</b></span><span class="g"><i class="hy"></i></span><span class="g"><b>1</b></span><span class="g"><b>3</b></span><span class="g"><b>6</b></span><span class="g"><b style="transform:scaleX(0.78)">B</b></span><span class="g"><b style="transform:scaleX(0.72)">N</b></span></span></div>
<div class="c" style="left:5px;top:784px;width:84px;height:89px"></div>
<div class="t b" style="left:6px;width:84px;top:818.0px"><span class="m"><span class="g"><b>1</b></span><span class="g"><b style="left:-8px">.</b></span><span class="g"><b>1</b></span></span></div>
<div class="c" style="left:90px;top:784px;width:86px;height:44px"></div>
<div class="t b" style="left:91px;width:86px;top:797.0px">直带针</div>
<div class="c" style="left:177px;top:784px;width:78px;height:44px"></div>
<div class="c" style="left:256px;top:784px;width:78px;height:44px"></div>
<div class="c" style="left:335px;top:784px;width:78px;height:44px"></div>
<div class="c" style="left:414px;top:784px;width:78px;height:44px"></div>
<div class="c" style="left:493px;top:784px;width:78px;height:44px"></div>
<div class="t" style="left:493.4px;width:78px;top:798.0px"><span class="m"><span class="g"><b style="transform:scaleX(0.95)">S</b></span><span class="g"><i class="hy"></i></span><span class="g"><b>0</b></span><span class="g"><b>5</b></span><span class="g"><b>7</b></span><span class="g" style="width:16px"><svg class="mn" width="17" height="11" fill="currentColor"><path d="M1 0h10v1H1zM0 10h12v1H0zM1 0h6v11H1zM9 0h2v11H9zM11 1h1.6L15 11h-1.6zM14 0h2v11h-2zM13 0h4v1h-4z"/></svg></span></span></div>
<div class="c" style="left:572px;top:784px;width:71px;height:44px"></div>
<div class="t" style="left:572.4px;width:71px;top:798.0px"><span class="m"><span class="g"><b style="transform:scaleX(0.95)">S</b></span><span class="g"><i class="hy"></i></span><span class="g"><b>0</b></span><span class="g"><b>6</b></span><span class="g"><b>7</b></span><span class="g" style="width:16px"><svg class="mn" width="17" height="11" fill="currentColor"><path d="M1 0h10v1H1zM0 10h12v1H0zM1 0h6v11H1zM9 0h2v11H9zM11 1h1.6L15 11h-1.6zM14 0h2v11h-2zM13 0h4v1h-4z"/></svg></span></span></div>
<div class="c" style="left:644px;top:784px;width:72px;height:44px"></div>
<div class="t" style="left:644.5px;width:72px;top:798.0px"><span class="m"><span class="g"><b style="transform:scaleX(0.95)">S</b></span><span class="g"><i class="hy"></i></span><span class="g"><b>0</b></span><span class="g"><b>7</b></span><span class="g"><b>7</b></span><span class="g" style="width:16px"><svg class="mn" width="17" height="11" fill="currentColor"><path d="M1 0h10v1H1zM0 10h12v1H0zM1 0h6v11H1zM9 0h2v11H9zM11 1h1.6L15 11h-1.6zM14 0h2v11h-2zM13 0h4v1h-4z"/></svg></span></span></div>
<div class="c" style="left:717px;top:784px;width:71px;height:44px"></div>
<div class="t" style="left:717.6px;width:71px;top:798.0px"><span class="m"><span class="g"><b style="transform:scaleX(0.95)">S</b></span><span class="g"><i class="hy"></i></span><span class="g"><b>0</b></span><span class="g"><b>8</b></span><span class="g"><b>7</b></span><span class="g" style="width:16px"><svg class="mn" width="17" height="11" fill="currentColor"><path d="M1 0h10v1H1zM0 10h12v1H0zM1 0h6v11H1zM9 0h2v11H9zM11 1h1.6L15 11h-1.6zM14 0h2v11h-2zM13 0h4v1h-4z"/></svg></span></span></div>
<div class="c" style="left:789px;top:784px;width:70px;height:44px"></div>
<div class="t" style="left:789.7px;width:70px;top:798.0px"><span class="m"><span class="g"><b style="transform:scaleX(0.95)">S</b></span><span class="g"><i class="hy"></i></span><span class="g"><b>0</b></span><span class="g"><b>9</b></span><span class="g"><b>7</b></span><span class="g" style="width:16px"><svg class="mn" width="17" height="11" fill="currentColor"><path d="M1 0h10v1H1zM0 10h12v1H0zM1 0h6v11H1zM9 0h2v11H9zM11 1h1.6L15 11h-1.6zM14 0h2v11h-2zM13 0h4v1h-4z"/></svg></span></span></div>
<div class="c" style="left:860px;top:784px;width:70px;height:44px"></div>
<div class="t" style="left:860.8px;width:70px;top:798.0px"><span class="m"><span class="g"><b style="transform:scaleX(0.95)">S</b></span><span class="g"><i class="hy"></i></span><span class="g"><b>1</b></span><span class="g"><b>0</b></span><span class="g"><b>7</b></span><span class="g" style="width:16px"><svg class="mn" width="17" height="11" fill="currentColor"><path d="M1 0h10v1H1zM0 10h12v1H0zM1 0h6v11H1zM9 0h2v11H9zM11 1h1.6L15 11h-1.6zM14 0h2v11h-2zM13 0h4v1h-4z"/></svg></span></span></div>
<div class="c" style="left:931px;top:784px;width:71px;height:44px"></div>
<div class="t" style="left:931.8px;width:71px;top:798.0px"><span class="m"><span class="g"><b style="transform:scaleX(0.95)">S</b></span><span class="g"><i class="hy"></i></span><span class="g"><b>1</b></span><span class="g"><b>1</b></span><span class="g"><b>7</b></span><span class="g" style="width:16px"><svg class="mn" width="17" height="11" fill="currentColor"><path d="M1 0h10v1H1zM0 10h12v1H0zM1 0h6v11H1zM9 0h2v11H9zM11 1h1.6L15 11h-1.6zM14 0h2v11h-2zM13 0h4v1h-4z"/></svg></span></span></div>
<div class="c" style="left:1003px;top:784px;width:71px;height:44px"></div>
<div class="t" style="left:1003.9px;width:71px;top:798.0px"><span class="m"><span class="g"><b style="transform:scaleX(0.95)">S</b></span><span class="g"><i class="hy"></i></span><span class="g"><b>1</b></span><span class="g"><b>2</b></span><span class="g"><b>7</b></span><span class="g" style="width:16px"><svg class="mn" width="17" height="11" fill="currentColor"><path d="M1 0h10v1H1zM0 10h12v1H0zM1 0h6v11H1zM9 0h2v11H9zM11 1h1.6L15 11h-1.6zM14 0h2v11h-2zM13 0h4v1h-4z"/></svg></span></span></div>
<div class="c" style="left:1075px;top:784px;width:70px;height:44px"></div>
<div class="t" style="left:1076.0px;width:70px;top:798.0px"><span class="m"><span class="g"><b style="transform:scaleX(0.95)">S</b></span><span class="g"><i class="hy"></i></span><span class="g"><b>1</b></span><span class="g"><b>3</b></span><span class="g"><b>7</b></span><span class="g" style="width:16px"><svg class="mn" width="17" height="11" fill="currentColor"><path d="M1 0h10v1H1zM0 10h12v1H0zM1 0h6v11H1zM9 0h2v11H9zM11 1h1.6L15 11h-1.6zM14 0h2v11h-2zM13 0h4v1h-4z"/></svg></span></span></div>
<div class="c" style="left:90px;top:829px;width:86px;height:44px"></div>
<div class="t b" style="left:91px;width:86px;top:842.0px">侧放针</div>
<div class="c" style="left:177px;top:829px;width:78px;height:44px"></div>
<div class="c" style="left:256px;top:829px;width:78px;height:44px"></div>
<div class="c" style="left:335px;top:829px;width:78px;height:44px"></div>
<div class="c" style="left:414px;top:829px;width:78px;height:44px"></div>
<div class="c" style="left:493px;top:829px;width:78px;height:44px"></div>
<div class="t" style="left:493.4px;width:78px;top:843.0px"><span class="m"><span class="g"><b style="transform:scaleX(0.95)">S</b></span><span class="g"><i class="hy"></i></span><span class="g"><b>0</b></span><span class="g"><b>5</b></span><span class="g"><b>7</b></span><span class="g"><b style="transform:scaleX(0.78)">B</b></span><span class="g"><b style="transform:scaleX(0.72)">N</b></span></span></div>
<div class="c" style="left:572px;top:829px;width:71px;height:44px"></div>
<div class="t" style="left:572.4px;width:71px;top:843.0px"><span class="m"><span class="g"><b style="transform:scaleX(0.95)">S</b></span><span class="g"><i class="hy"></i></span><span class="g"><b>0</b></span><span class="g"><b>6</b></span><span class="g"><b>7</b></span><span class="g"><b style="transform:scaleX(0.78)">B</b></span><span class="g"><b style="transform:scaleX(0.72)">N</b></span></span></div>
<div class="c" style="left:644px;top:829px;width:72px;height:44px"></div>
<div class="t" style="left:644.5px;width:72px;top:843.0px"><span class="m"><span class="g"><b style="transform:scaleX(0.95)">S</b></span><span class="g"><i class="hy"></i></span><span class="g"><b>0</b></span><span class="g"><b>7</b></span><span class="g"><b>7</b></span><span class="g"><b style="transform:scaleX(0.78)">B</b></span><span class="g"><b style="transform:scaleX(0.72)">N</b></span></span></div>
<div class="c" style="left:717px;top:829px;width:71px;height:44px"></div>
<div class="t" style="left:717.6px;width:71px;top:843.0px"><span class="m"><span class="g"><b style="transform:scaleX(0.95)">S</b></span><span class="g"><i class="hy"></i></span><span class="g"><b>0</b></span><span class="g"><b>8</b></span><span class="g"><b>7</b></span><span class="g"><b style="transform:scaleX(0.78)">B</b></span><span class="g"><b style="transform:scaleX(0.72)">N</b></span></span></div>
<div class="c" style="left:789px;top:829px;width:70px;height:44px"></div>
<div class="t" style="left:789.7px;width:70px;top:843.0px"><span class="m"><span class="g"><b style="transform:scaleX(0.95)">S</b></span><span class="g"><i class="hy"></i></span><span class="g"><b>0</b></span><span class="g"><b>9</b></span><span class="g"><b>7</b></span><span class="g"><b style="transform:scaleX(0.78)">B</b></span><span class="g"><b style="transform:scaleX(0.72)">N</b></span></span></div>
<div class="c" style="left:860px;top:829px;width:70px;height:44px"></div>
<div class="t" style="left:860.8px;width:70px;top:843.0px"><span class="m"><span class="g"><b style="transform:scaleX(0.95)">S</b></span><span class="g"><i class="hy"></i></span><span class="g"><b>1</b></span><span class="g"><b>0</b></span><span class="g"><b>7</b></span><span class="g"><b style="transform:scaleX(0.78)">B</b></span><span class="g"><b style="transform:scaleX(0.72)">N</b></span></span></div>
<div class="c" style="left:931px;top:829px;width:71px;height:44px"></div>
<div class="t" style="left:931.8px;width:71px;top:843.0px"><span class="m"><span class="g"><b style="transform:scaleX(0.95)">S</b></span><span class="g"><i class="hy"></i></span><span class="g"><b>1</b></span><span class="g"><b>1</b></span><span class="g"><b>7</b></span><span class="g"><b style="transform:scaleX(0.78)">B</b></span><span class="g"><b style="transform:scaleX(0.72)">N</b></span></span></div>
<div class="c" style="left:1003px;top:829px;width:71px;height:44px"></div>
<div class="t" style="left:1003.9px;width:71px;top:843.0px"><span class="m"><span class="g"><b style="transform:scaleX(0.95)">S</b></span><span class="g"><i class="hy"></i></span><span class="g"><b>1</b></span><span class="g"><b>2</b></span><span class="g"><b>7</b></span><span class="g"><b style="transform:scaleX(0.78)">B</b></span><span class="g"><b style="transform:scaleX(0.72)">N</b></span></span></div>
<div class="c" style="left:1075px;top:829px;width:70px;height:44px"></div>
<div class="t" style="left:1076.0px;width:70px;top:843.0px"><span class="m"><span class="g"><b style="transform:scaleX(0.95)">S</b></span><span class="g"><i class="hy"></i></span><span class="g"><b>1</b></span><span class="g"><b>3</b></span><span class="g"><b>7</b></span><span class="g"><b style="transform:scaleX(0.78)">B</b></span><span class="g"><b style="transform:scaleX(0.72)">N</b></span></span></div>
<div class="c" style="left:5px;top:874px;width:84px;height:89px"></div>
<div class="t b" style="left:6px;width:84px;top:908.0px"><span class="m"><span class="g"><b>1</b></span><span class="g"><b style="left:-8px">.</b></span><span class="g"><b>2</b></span></span></div>
<div class="c" style="left:90px;top:874px;width:86px;height:44px"></div>
<div class="t b" style="left:91px;width:86px;top:887.0px">直带针</div>
<div class="c" style="left:177px;top:874px;width:78px;height:44px"></div>
<div class="c" style="left:256px;top:874px;width:78px;height:44px"></div>
<div class="c" style="left:335px;top:874px;width:78px;height:44px"></div>
<div class="c" style="left:414px;top:874px;width:78px;height:44px"></div>
<div class="c" style="left:493px;top:874px;width:78px;height:44px"></div>
<div class="t" style="left:493.4px;width:78px;top:888.0px"><span class="m"><span class="g"><b style="transform:scaleX(0.95)">S</b></span><span class="g"><i class="hy"></i></span><span class="g"><b>0</b></span><span class="g"><b>5</b></span><span class="g"><b>8</b></span><span class="g" style="width:16px"><svg class="mn" width="17" height="11" fill="currentColor"><path d="M1 0h10v1H1zM0 10h12v1H0zM1 0h6v11H1zM9 0h2v11H9zM11 1h1.6L15 11h-1.6zM14 0h2v11h-2zM13 0h4v1h-4z"/></svg></span></span></div>
<div class="c" style="left:572px;top:874px;width:71px;height:44px"></div>
<div class="t" style="left:572.4px;width:71px;top:888.0px"><span class="m"><span class="g"><b style="transform:scaleX(0.95)">S</b></span><span class="g"><i class="hy"></i></span><span class="g"><b>0</b></span><span class="g"><b>6</b></span><span class="g"><b>8</b></span><span class="g" style="width:16px"><svg class="mn" width="17" height="11" fill="currentColor"><path d="M1 0h10v1H1zM0 10h12v1H0zM1 0h6v11H1zM9 0h2v11H9zM11 1h1.6L15 11h-1.6zM14 0h2v11h-2zM13 0h4v1h-4z"/></svg></span></span></div>
<div class="c" style="left:644px;top:874px;width:72px;height:44px"></div>
<div class="t" style="left:644.5px;width:72px;top:888.0px"><span class="m"><span class="g"><b style="transform:scaleX(0.95)">S</b></span><span class="g"><i class="hy"></i></span><span class="g"><b>0</b></span><span class="g"><b>7</b></span><span class="g"><b>8</b></span><span class="g" style="width:16px"><svg class="mn" width="17" height="11" fill="currentColor"><path d="M1 0h10v1H1zM0 10h12v1H0zM1 0h6v11H1zM9 0h2v11H9zM11 1h1.6L15 11h-1.6zM14 0h2v11h-2zM13 0h4v1h-4z"/></svg></span></span></div>
<div class="c" style="left:717px;top:874px;width:71px;height:44px"></div>
<div class="t" style="left:717.6px;width:71px;top:888.0px"><span class="m"><span class="g"><b style="transform:scaleX(0.95)">S</b></span><span class="g"><i class="hy"></i></span><span class="g"><b>0</b></span><span class="g"><b>8</b></span><span class="g"><b>8</b></span><span class="g" style="width:16px"><svg class="mn" width="17" height="11" fill="currentColor"><path d="M1 0h10v1H1zM0 10h12v1H0zM1 0h6v11H1zM9 0h2v11H9zM11 1h1.6L15 11h-1.6zM14 0h2v11h-2zM13 0h4v1h-4z"/></svg></span></span></div>
<div class="c" style="left:789px;top:874px;width:70px;height:44px"></div>
<div class="t" style="left:789.7px;width:70px;top:888.0px"><span class="m"><span class="g"><b style="transform:scaleX(0.95)">S</b></span><span class="g"><i class="hy"></i></span><span class="g"><b>0</b></span><span class="g"><b>9</b></span><span class="g"><b>8</b></span><span class="g" style="width:16px"><svg class="mn" width="17" height="11" fill="currentColor"><path d="M1 0h10v1H1zM0 10h12v1H0zM1 0h6v11H1zM9 0h2v11H9zM11 1h1.6L15 11h-1.6zM14 0h2v11h-2zM13 0h4v1h-4z"/></svg></span></span></div>
<div class="c" style="left:860px;top:874px;width:70px;height:44px"></div>
<div class="t" style="left:860.8px;width:70px;top:888.0px"><span class="m"><span class="g"><b style="transform:scaleX(0.95)">S</b></span><span class="g"><i class="hy"></i></span><span class="g"><b>1</b></span><span class="g"><b>0</b></span><span class="g"><b>8</b></span><span class="g" style="width:16px"><svg class="mn" width="17" height="11" fill="currentColor"><path d="M1 0h10v1H1zM0 10h12v1H0zM1 0h6v11H1zM9 0h2v11H9zM11 1h1.6L15 11h-1.6zM14 0h2v11h-2zM13 0h4v1h-4z"/></svg></span></span></div>
<div class="c" style="left:931px;top:874px;width:71px;height:44px"></div>
<div class="t" style="left:931.8px;width:71px;top:888.0px"><span class="m"><span class="g"><b style="transform:scaleX(0.95)">S</b></span><span class="g"><i class="hy"></i></span><span class="g"><b>1</b></span><span class="g"><b>1</b></span><span class="g"><b>8</b></span><span class="g" style="width:16px"><svg class="mn" width="17" height="11" fill="currentColor"><path d="M1 0h10v1H1zM0 10h12v1H0zM1 0h6v11H1zM9 0h2v11H9zM11 1h1.6L15 11h-1.6zM14 0h2v11h-2zM13 0h4v1h-4z"/></svg></span></span></div>
<div class="c" style="left:1003px;top:874px;width:71px;height:44px"></div>
<div class="t" style="left:1003.9px;width:71px;top:888.0px"><span class="m"><span class="g"><b style="transform:scaleX(0.95)">S</b></span><span class="g"><i class="hy"></i></span><span class="g"><b>1</b></span><span class="g"><b>2</b></span><span class="g"><b>8</b></span><span class="g" style="width:16px"><svg class="mn" width="17" height="11" fill="currentColor"><path d="M1 0h10v1H1zM0 10h12v1H0zM1 0h6v11H1zM9 0h2v11H9zM11 1h1.6L15 11h-1.6zM14 0h2v11h-2zM13 0h4v1h-4z"/></svg></span></span></div>
<div class="c" style="left:1075px;top:874px;width:70px;height:44px"></div>
<div class="t" style="left:1076.0px;width:70px;top:888.0px"><span class="m"><span class="g"><b style="transform:scaleX(0.95)">S</b></span><span class="g"><i class="hy"></i></span><span class="g"><b>1</b></span><span class="g"><b>3</b></span><span class="g"><b>8</b></span><span class="g" style="width:16px"><svg class="mn" width="17" height="11" fill="currentColor"><path d="M1 0h10v1H1zM0 10h12v1H0zM1 0h6v11H1zM9 0h2v11H9zM11 1h1.6L15 11h-1.6zM14 0h2v11h-2zM13 0h4v1h-4z"/></svg></span></span></div>
<div class="c" style="left:90px;top:919px;width:86px;height:44px"></div>
<div class="t b" style="left:91px;width:86px;top:932.0px">侧放针</div>
<div class="c" style="left:177px;top:919px;width:78px;height:44px"></div>
<div class="c" style="left:256px;top:919px;width:78px;height:44px"></div>
<div class="c" style="left:335px;top:919px;width:78px;height:44px"></div>
<div class="c" style="left:414px;top:919px;width:78px;height:44px"></div>
<div class="c" style="left:493px;top:919px;width:78px;height:44px"></div>
<div class="t" style="left:493.4px;width:78px;top:933.0px"><span class="m"><span class="g"><b style="transform:scaleX(0.95)">S</b></span><span class="g"><i class="hy"></i></span><span class="g"><b>0</b></span><span class="g"><b>5</b></span><span class="g"><b>8</b></span><span class="g"><b style="transform:scaleX(0.78)">B</b></span><span class="g"><b style="transform:scaleX(0.72)">N</b></span></span></div>
<div class="c" style="left:572px;top:919px;width:71px;height:44px"></div>
<div class="t" style="left:572.4px;width:71px;top:933.0px"><span class="m"><span class="g"><b style="transform:scaleX(0.95)">S</b></span><span class="g"><i class="hy"></i></span><span class="g"><b>0</b></span><span class="g"><b>6</b></span><span class="g"><b>8</b></span><span class="g"><b style="transform:scaleX(0.78)">B</b></span><span class="g"><b style="transform:scaleX(0.72)">N</b></span></span></div>
<div class="c" style="left:644px;top:919px;width:72px;height:44px"></div>
<div class="t" style="left:644.5px;width:72px;top:933.0px"><span class="m"><span class="g"><b style="transform:scaleX(0.95)">S</b></span><span class="g"><i class="hy"></i></span><span class="g"><b>0</b></span><span class="g"><b>7</b></span><span class="g"><b>8</b></span><span class="g"><b style="transform:scaleX(0.78)">B</b></span><span class="g"><b style="transform:scaleX(0.72)">N</b></span></span></div>
<div class="c" style="left:717px;top:919px;width:71px;height:44px"></div>
<div class="t" style="left:717.6px;width:71px;top:933.0px"><span class="m"><span class="g"><b style="transform:scaleX(0.95)">S</b></span><span class="g"><i class="hy"></i></span><span class="g"><b>0</b></span><span class="g"><b>8</b></span><span class="g"><b>8</b></span><span class="g"><b style="transform:scaleX(0.78)">B</b></span><span class="g"><b style="transform:scaleX(0.72)">N</b></span></span></div>
<div class="c" style="left:789px;top:919px;width:70px;height:44px"></div>
<div class="t" style="left:789.7px;width:70px;top:933.0px"><span class="m"><span class="g"><b style="transform:scaleX(0.95)">S</b></span><span class="g"><i class="hy"></i></span><span class="g"><b>0</b></span><span class="g"><b>9</b></span><span class="g"><b>8</b></span><span class="g"><b style="transform:scaleX(0.78)">B</b></span><span class="g"><b style="transform:scaleX(0.72)">N</b></span></span></div>
<div class="c" style="left:860px;top:919px;width:70px;height:44px"></div>
<div class="t" style="left:860.8px;width:70px;top:933.0px"><span class="m"><span class="g"><b style="transform:scaleX(0.95)">S</b></span><span class="g"><i class="hy"></i></span><span class="g"><b>1</b></span><span class="g"><b>0</b></span><span class="g"><b>8</b></span><span class="g"><b style="transform:scaleX(0.78)">B</b></span><span class="g"><b style="transform:scaleX(0.72)">N</b></span></span></div>
<div class="c" style="left:931px;top:919px;width:71px;height:44px"></div>
<div class="t" style="left:931.8px;width:71px;top:933.0px"><span class="m"><span class="g"><b style="transform:scaleX(0.95)">S</b></span><span class="g"><i class="hy"></i></span><span class="g"><b>1</b></span><span class="g"><b>1</b></span><span class="g"><b>8</b></span><span class="g"><b style="transform:scaleX(0.78)">B</b></span><span class="g"><b style="transform:scaleX(0.72)">N</b></span></span></div>
<div class="c" style="left:1003px;top:919px;width:71px;height:44px"></div>
<div class="t" style="left:1003.9px;width:71px;top:933.0px"><span class="m"><span class="g"><b style="transform:scaleX(0.95)">S</b></span><span class="g"><i class="hy"></i></span><span class="g"><b>1</b></span><span class="g"><b>2</b></span><span class="g"><b>8</b></span><span class="g"><b style="transform:scaleX(0.78)">B</b></span><span class="g"><b style="transform:scaleX(0.72)">N</b></span></span></div>
<div class="c" style="left:1075px;top:919px;width:70px;height:44px"></div>
<div class="t" style="left:1076.0px;width:70px;top:933.0px"><span class="m"><span class="g"><b style="transform:scaleX(0.95)">S</b></span><span class="g"><i class="hy"></i></span><span class="g"><b>1</b></span><span class="g"><b>3</b></span><span class="g"><b>8</b></span><span class="g"><b style="transform:scaleX(0.78)">B</b></span><span class="g"><b style="transform:scaleX(0.72)">N</b></span></span></div>
<div class="c" style="left:5px;top:964px;width:84px;height:89px"></div>
<div class="t b" style="left:6px;width:84px;top:998.0px"><span class="m"><span class="g"><b>1</b></span><span class="g"><b style="left:-8px">.</b></span><span class="g"><b>6</b></span></span></div>
<div class="c" style="left:90px;top:964px;width:86px;height:44px"></div>
<div class="t b" style="left:91px;width:86px;top:977.0px">直带针</div>
<div class="c" style="left:177px;top:964px;width:78px;height:44px"></div>
<div class="c" style="left:256px;top:964px;width:78px;height:44px"></div>
<div class="c" style="left:335px;top:964px;width:78px;height:44px"></div>
<div class="c" style="left:414px;top:964px;width:78px;height:44px"></div>
<div class="c" style="left:493px;top:964px;width:78px;height:44px"></div>
<div class="t" style="left:493.4px;width:78px;top:978.0px"><span class="m"><span class="g"><b style="transform:scaleX(0.95)">S</b></span><span class="g"><i class="hy"></i></span><span class="g"><b>0</b></span><span class="g"><b>5</b></span><span class="g"><b>9</b></span><span class="g" style="width:16px"><svg class="mn" width="17" height="11" fill="currentColor"><path d="M1 0h10v1H1zM0 10h12v1H0zM1 0h6v11H1zM9 0h2v11H9zM11 1h1.6L15 11h-1.6zM14 0h2v11h-2zM13 0h4v1h-4z"/></svg></span></span></div>
<div class="c" style="left:572px;top:964px;width:71px;height:44px"></div>
<div class="t" style="left:572.4px;width:71px;top:978.0px"><span class="m"><span class="g"><b style="transform:scaleX(0.95)">S</b></span><span class="g"><i class="hy"></i></span><span class="g"><b>0</b></span><span class="g"><b>6</b></span><span class="g"><b>9</b></span><span class="g" style="width:16px"><svg class="mn" width="17" height="11" fill="currentColor"><path d="M1 0h10v1H1zM0 10h12v1H0zM1 0h6v11H1zM9 0h2v11H9zM11 1h1.6L15 11h-1.6zM14 0h2v11h-2zM13 0h4v1h-4z"/></svg></span></span></div>
<div class="c" style="left:644px;top:964px;width:72px;height:44px"></div>
<div class="t" style="left:644.5px;width:72px;top:978.0px"><span class="m"><span class="g"><b style="transform:scaleX(0.95)">S</b></span><span class="g"><i class="hy"></i></span><span class="g"><b>0</b></span><span class="g"><b>7</b></span><span class="g"><b>9</b></span><span class="g" style="width:16px"><svg class="mn" width="17" height="11" fill="currentColor"><path d="M1 0h10v1H1zM0 10h12v1H0zM1 0h6v11H1zM9 0h2v11H9zM11 1h1.6L15 11h-1.6zM14 0h2v11h-2zM13 0h4v1h-4z"/></svg></span></span></div>
<div class="c" style="left:717px;top:964px;width:71px;height:44px"></div>
<div class="t" style="left:717.6px;width:71px;top:978.0px"><span class="m"><span class="g"><b style="transform:scaleX(0.95)">S</b></span><span class="g"><i class="hy"></i></span><span class="g"><b>0</b></span><span class="g"><b>8</b></span><span class="g"><b>9</b></span><span class="g" style="width:16px"><svg class="mn" width="17" height="11" fill="currentColor"><path d="M1 0h10v1H1zM0 10h12v1H0zM1 0h6v11H1zM9 0h2v11H9zM11 1h1.6L15 11h-1.6zM14 0h2v11h-2zM13 0h4v1h-4z"/></svg></span></span></div>
<div class="c" style="left:789px;top:964px;width:70px;height:44px"></div>
<div class="t" style="left:789.7px;width:70px;top:978.0px"><span class="m"><span class="g"><b style="transform:scaleX(0.95)">S</b></span><span class="g"><i class="hy"></i></span><span class="g"><b>0</b></span><span class="g"><b>9</b></span><span class="g"><b>9</b></span><span class="g" style="width:16px"><svg class="mn" width="17" height="11" fill="currentColor"><path d="M1 0h10v1H1zM0 10h12v1H0zM1 0h6v11H1zM9 0h2v11H9zM11 1h1.6L15 11h-1.6zM14 0h2v11h-2zM13 0h4v1h-4z"/></svg></span></span></div>
<div class="c" style="left:860px;top:964px;width:70px;height:44px"></div>
<div class="t" style="left:860.8px;width:70px;top:978.0px"><span class="m"><span class="g"><b style="transform:scaleX(0.95)">S</b></span><span class="g"><i class="hy"></i></span><span class="g"><b>1</b></span><span class="g"><b>0</b></span><span class="g"><b>9</b></span><span class="g" style="width:16px"><svg class="mn" width="17" height="11" fill="currentColor"><path d="M1 0h10v1H1zM0 10h12v1H0zM1 0h6v11H1zM9 0h2v11H9zM11 1h1.6L15 11h-1.6zM14 0h2v11h-2zM13 0h4v1h-4z"/></svg></span></span></div>
<div class="c" style="left:931px;top:964px;width:71px;height:44px"></div>
<div class="t" style="left:931.8px;width:71px;top:978.0px"><span class="m"><span class="g"><b style="transform:scaleX(0.95)">S</b></span><span class="g"><i class="hy"></i></span><span class="g"><b>1</b></span><span class="g"><b>1</b></span><span class="g"><b>9</b></span><span class="g" style="width:16px"><svg class="mn" width="17" height="11" fill="currentColor"><path d="M1 0h10v1H1zM0 10h12v1H0zM1 0h6v11H1zM9 0h2v11H9zM11 1h1.6L15 11h-1.6zM14 0h2v11h-2zM13 0h4v1h-4z"/></svg></span></span></div>
<div class="c" style="left:1003px;top:964px;width:71px;height:44px"></div>
<div class="t" style="left:1003.9px;width:71px;top:978.0px"><span class="m"><span class="g"><b style="transform:scaleX(0.95)">S</b></span><span class="g"><i class="hy"></i></span><span class="g"><b>1</b></span><span class="g"><b>2</b></span><span class="g"><b>9</b></span><span class="g" style="width:16px"><svg class="mn" width="17" height="11" fill="currentColor"><path d="M1 0h10v1H1zM0 10h12v1H0zM1 0h6v11H1zM9 0h2v11H9zM11 1h1.6L15 11h-1.6zM14 0h2v11h-2zM13 0h4v1h-4z"/></svg></span></span></div>
<div class="c" style="left:1075px;top:964px;width:70px;height:44px"></div>
<div class="t or" style="left:1076.0px;width:70px;top:978.0px"><span class="m"><span class="g"><b style="transform:scaleX(0.95)">S</b></span><span class="g"><i class="hy"></i></span><span class="g"><b>1</b></span><span class="g"><b>3</b></span><span class="g"><b>9</b></span><span class="g" style="width:16px"><svg class="mn" width="17" height="11" fill="currentColor"><path d="M1 0h10v1H1zM0 10h12v1H0zM1 0h6v11H1zM9 0h2v11H9zM11 1h1.6L15 11h-1.6zM14 0h2v11h-2zM13 0h4v1h-4z"/></svg></span></span></div>
<div class="c" style="left:90px;top:1009px;width:86px;height:44px"></div>
<div class="t b" style="left:91px;width:86px;top:1021.0px">侧放针</div>
<div class="c" style="left:177px;top:1009px;width:78px;height:44px"></div>
<div class="c" style="left:256px;top:1009px;width:78px;height:44px"></div>
<div class="c" style="left:335px;top:1009px;width:78px;height:44px"></div>
<div class="c" style="left:414px;top:1009px;width:78px;height:44px"></div>
<div class="c" style="left:493px;top:1009px;width:78px;height:44px"></div>
<div class="t" style="left:493.4px;width:78px;top:1022.0px"><span class="m"><span class="g"><b style="transform:scaleX(0.95)">S</b></span><span class="g"><i class="hy"></i></span><span class="g"><b>0</b></span><span class="g"><b>5</b></span><span class="g"><b>9</b></span><span class="g"><b style="transform:scaleX(0.78)">B</b></span><span class="g"><b style="transform:scaleX(0.72)">N</b></span></span></div>
<div class="c" style="left:572px;top:1009px;width:71px;height:44px"></div>
<div class="t" style="left:572.4px;width:71px;top:1022.0px"><span class="m"><span class="g"><b style="transform:scaleX(0.95)">S</b></span><span class="g"><i class="hy"></i></span><span class="g"><b>0</b></span><span class="g"><b>6</b></span><span class="g"><b>9</b></span><span class="g"><b style="transform:scaleX(0.78)">B</b></span><span class="g"><b style="transform:scaleX(0.72)">N</b></span></span></div>
<div class="c" style="left:644px;top:1009px;width:72px;height:44px"></div>
<div class="t" style="left:644.5px;width:72px;top:1022.0px"><span class="m"><span class="g"><b style="transform:scaleX(0.95)">S</b></span><span class="g"><i class="hy"></i></span><span class="g"><b>0</b></span><span class="g"><b>7</b></span><span class="g"><b>9</b></span><span class="g"><b style="transform:scaleX(0.78)">B</b></span><span class="g"><b style="transform:scaleX(0.72)">N</b></span></span></div>
<div class="c" style="left:717px;top:1009px;width:71px;height:44px"></div>
<div class="t" style="left:717.6px;width:71px;top:1022.0px"><span class="m"><span class="g"><b style="transform:scaleX(0.95)">S</b></span><span class="g"><i class="hy"></i></span><span class="g"><b>0</b></span><span class="g"><b>8</b></span><span class="g"><b>9</b></span><span class="g"><b style="transform:scaleX(0.78)">B</b></span><span class="g"><b style="transform:scaleX(0.72)">N</b></span></span></div>
<div class="c" style="left:789px;top:1009px;width:70px;height:44px"></div>
<div class="t" style="left:789.7px;width:70px;top:1022.0px"><span class="m"><span class="g"><b style="transform:scaleX(0.95)">S</b></span><span class="g"><i class="hy"></i></span><span class="g"><b>0</b></span><span class="g"><b>9</b></span><span class="g"><b>9</b></span><span class="g"><b style="transform:scaleX(0.78)">B</b></span><span class="g"><b style="transform:scaleX(0.72)">N</b></span></span></div>
<div class="c" style="left:860px;top:1009px;width:70px;height:44px"></div>
<div class="t" style="left:860.8px;width:70px;top:1022.0px"><span class="m"><span class="g"><b style="transform:scaleX(0.95)">S</b></span><span class="g"><i class="hy"></i></span><span class="g"><b>1</b></span><span class="g"><b>0</b></span><span class="g"><b>9</b></span><span class="g"><b style="transform:scaleX(0.78)">B</b></span><span class="g"><b style="transform:scaleX(0.72)">N</b></span></span></div>
<div class="c" style="left:931px;top:1009px;width:71px;height:44px"></div>
<div class="t" style="left:931.8px;width:71px;top:1022.0px"><span class="m"><span class="g"><b style="transform:scaleX(0.95)">S</b></span><span class="g"><i class="hy"></i></span><span class="g"><b>1</b></span><span class="g"><b>1</b></span><span class="g"><b>9</b></span><span class="g"><b style="transform:scaleX(0.78)">B</b></span><span class="g"><b style="transform:scaleX(0.72)">N</b></span></span></div>
<div class="c" style="left:1003px;top:1009px;width:71px;height:44px"></div>
<div class="t" style="left:1003.9px;width:71px;top:1022.0px"><span class="m"><span class="g"><b style="transform:scaleX(0.95)">S</b></span><span class="g"><i class="hy"></i></span><span class="g"><b>1</b></span><span class="g"><b>2</b></span><span class="g"><b>9</b></span><span class="g"><b style="transform:scaleX(0.78)">B</b></span><span class="g"><b style="transform:scaleX(0.72)">N</b></span></span></div>
<div class="c" style="left:1075px;top:1009px;width:70px;height:44px"></div>
<div class="t" style="left:1076.0px;width:70px;top:1022.0px"><span class="m"><span class="g"><b style="transform:scaleX(0.95)">S</b></span><span class="g"><i class="hy"></i></span><span class="g"><b>1</b></span><span class="g"><b>3</b></span><span class="g"><b>9</b></span><span class="g"><b style="transform:scaleX(0.78)">B</b></span><span class="g"><b style="transform:scaleX(0.72)">N</b></span></span></div>
</body></html>
